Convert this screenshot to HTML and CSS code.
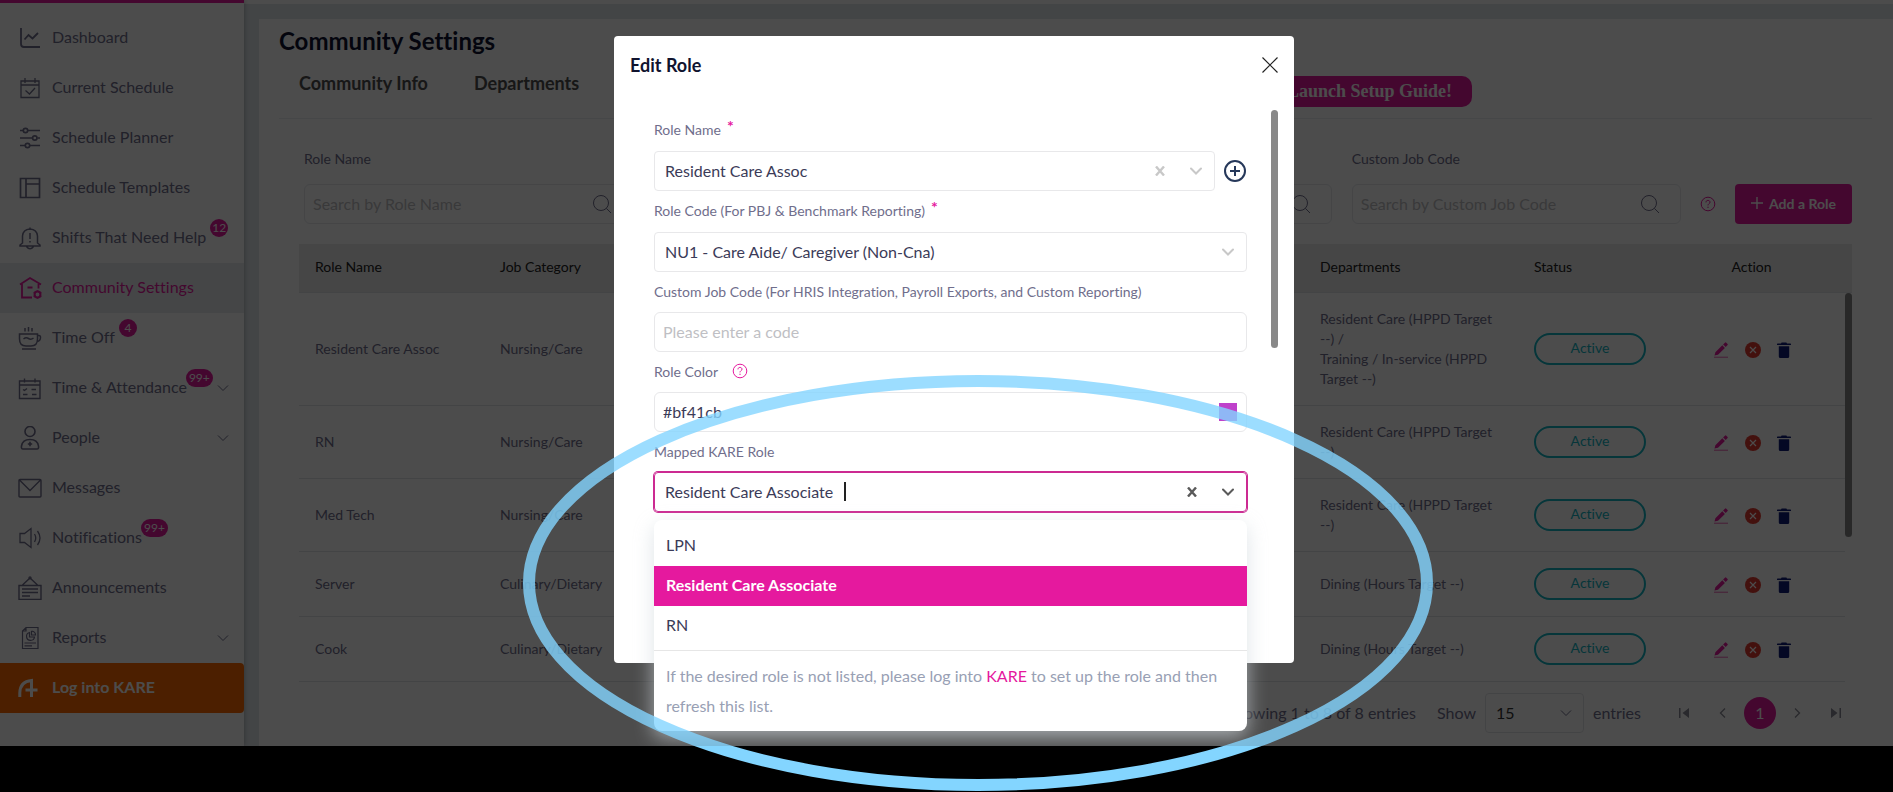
FILE: index.html
```
<!DOCTYPE html>
<html lang="en">
<head>
    <meta charset="UTF-8">
    <meta name="viewport" content="width=device-width, initial-scale=1.0">
    <title>Community Settings</title>
    <link rel="stylesheet" href="styles.css">
</head>
<body>
<svg class="sprite" aria-hidden="true">
    <symbol id="chevron" viewBox="0 0 12 8"><path d="M1 1.5L6 6.5L11 1.5"/></symbol>
    <symbol id="search" viewBox="0 0 20 20"><circle cx="9" cy="9" r="7.5"/><path d="M14.3 14.3L19 19"/></symbol>
    <symbol id="help" viewBox="0 0 16 16"><circle cx="8" cy="8" r="6.8"/><path d="M6 6.4C6 5 6.8 4.4 8 4.4S10 5.2 10 6.2C10 7.6 8 7.6 8 9.4M8 10.7V12"/></symbol>
    <symbol id="edit" viewBox="0 0 16 18">
        <path fill="#e5199e" d="M1.5 14.5L2.4 11.2L9.3 4.3L11.9 6.9L5 13.8ZM10.1 3.5L12.2 1.4Q12.6 1 13 1.4L14.6 3Q15 3.5 14.6 4L12.7 6.1Z"/>
        <path fill="#f08cc8" d="M1 15.6H15V17H1Z"/>
    </symbol>
    <symbol id="deny" viewBox="0 0 16 16"><circle cx="8" cy="8" r="8" fill="#e23b30" stroke="none"/><path d="M5 5L11 11M11 5L5 11" stroke="#fff" stroke-width="1.2"/></symbol>
    <symbol id="trash" viewBox="0 0 14 16"><path fill="#101d7a" d="M0 2.2Q0 1.6 .6 1.6H4L4.6 .4H9.4L10 1.6H13.4Q14 1.6 14 2.2V3H0ZM1.8 4.2H12.2V14.5Q12.2 16 10.7 16H3.3Q1.8 16 1.8 14.5Z"/></symbol>
</svg>

<div class="app">
    <nav class="sidebar">
        <a class="nav_item" href="#">
            <svg class="nav_icon" viewBox="0 0 24 24"><path stroke-width="1.8" d="M3 2V18Q3 21 6 21H22M6.5 13.5L10.5 9L14.5 12.5L20 7"/></svg>
            <span class="nav_label">Dashboard</span>
        </a>
        <a class="nav_item" href="#">
            <svg class="nav_icon" viewBox="0 0 24 24"><path d="M3 5H21V21.5H3ZM3 9H21M7 2V7M17 2V7M7.5 14.5L11.5 18L17 12"/></svg>
            <span class="nav_label">Current Schedule</span>
        </a>
        <a class="nav_item" href="#">
            <svg class="nav_icon" viewBox="0 0 24 24"><g stroke-width="1.7"><path d="M2 4.5H5M10 4.5H22M2 12H14M19.5 12H22M2 19.5H7M12 19.5H22"/><circle cx="7.5" cy="4.5" r="2.2"/><circle cx="16.8" cy="12" r="2.2"/><circle cx="9.5" cy="19.5" r="2.2"/></g></svg>
            <span class="nav_label">Schedule Planner</span>
        </a>
        <a class="nav_item" href="#">
            <svg class="nav_icon" viewBox="0 0 24 24"><path stroke-width="1.7" d="M2.5 2.5H21.5V21.5H2.5ZM8 2.5V21.5M8 8H21.5"/></svg>
            <span class="nav_label">Schedule Templates</span>
        </a>
        <a class="nav_item" href="#">
            <svg class="nav_icon" viewBox="0 0 24 24"><path stroke-width="1.5" d="M4.5 17V10Q5 3.5 12 3Q19 3.5 19.5 10V17L22 19V20H2V19ZM8.5 20.5Q12 25 15.5 20.5M12 1.5V3M12 7V13M12 15V16.5"/></svg>
            <span class="nav_label">Shifts That Need Help<span class="badge">12</span></span>
        </a>
        <a class="nav_item active" href="#">
            <svg class="nav_icon" viewBox="0 0 24 24"><path stroke-width="1.8" d="M2 8.5L12 2L23 8.5M4 8V21.5H14M20.5 8V12.5M9.5 11.5H14.5"/><circle cx="19.5" cy="18.5" r="2.9" stroke-width="2"/><path stroke-width="1.7" d="M19.5 14.2V15M19.5 22V22.8M15.7 16.3L16.5 16.8M22.5 20.2L23.3 20.7M15.7 20.7L16.5 20.2M22.5 16.8L23.3 16.3"/></svg>
            <span class="nav_label">Community Settings</span>
        </a>
        <a class="nav_item" href="#">
            <svg class="nav_icon" viewBox="0 0 24 24"><path stroke-width="1.5" d="M1.5 8H19.5V13Q19.5 20 13 20H8Q1.5 20 1.5 13ZM19.5 9.5H21Q22.5 9.5 22.5 11.5Q22.5 15 19 15.5M4 23H18M7 2V5.5M10.5 1V5.5M14 2V5.5M5.5 13Q8 11 10.5 12.5T15.5 12"/></svg>
            <span class="nav_label">Time Off<span class="badge">4</span></span>
        </a>
        <a class="nav_item" href="#">
            <svg class="nav_icon" viewBox="0 0 24 24"><path stroke-width="1.4" d="M1.5 5H22V22.5H1.5ZM1.5 9H22M6.5 2.5V6.5M17 2.5V6.5M5 13.5L6.5 14.5L9 12.5M13.5 13.5H18M5 18.5H9.5M14 18.5H18.5"/></svg>
            <span class="nav_label">Time &amp; Attendance<span class="badge wide">99+</span></span>
            <svg class="nav_chevron"><use href="#chevron"/></svg>
        </a>
        <a class="nav_item" href="#">
            <svg class="nav_icon" viewBox="0 0 24 24"><g stroke-width="1.6"><circle cx="12" cy="5.5" r="5"/><path d="M5 23Q3 23 3.5 20Q4.5 13.5 12 13.5T20.5 20Q21 23 19 23ZM12 15.8V20.2M9.8 18H14.2"/></g></svg>
            <span class="nav_label">People</span>
            <svg class="nav_chevron"><use href="#chevron"/></svg>
        </a>
        <a class="nav_item" href="#">
            <svg class="nav_icon" viewBox="0 0 24 24"><path stroke-width="1.4" d="M2 3.5H22Q23 3.5 23 4.5V20Q23 21 22 21H2Q1 21 1 20V4.5Q1 3.5 2 3.5ZM1.5 4L12 14.5L22.5 4"/></svg>
            <span class="nav_label">Messages</span>
        </a>
        <a class="nav_item" href="#">
            <svg class="nav_icon" viewBox="0 0 24 24"><path d="M2 7.5H6.5L13 2.5V21.5L6.5 16.5H2ZM16.5 8Q19 12 16.5 16M19.5 5Q24.5 12 19.5 19"/></svg>
            <span class="nav_label">Notifications<span class="badge wide">99+</span></span>
        </a>
        <a class="nav_item" href="#">
            <svg class="nav_icon" viewBox="0 0 24 24"><path stroke-width="1.4" d="M1 9.5H23V23.5H1ZM4.5 9L12 2L19.5 9M4 13H20M4 16.5H20M4 20H12"/><circle cx="12" cy="1.8" r="1"/></svg>
            <span class="nav_label">Announcements</span>
        </a>
        <a class="nav_item" href="#">
            <svg class="nav_icon" viewBox="0 0 24 24"><path stroke-width="1.2" d="M8 1.5H20V22.5H4.5V5ZM8 1.5V5H4.5M6.5 17H18M6.5 19.8H14M11.5 6.5A4 4 0 1 0 16.5 11H11.5ZM13.5 5V9H17.5Q17.5 5.5 13.5 5"/></svg>
            <span class="nav_label">Reports</span>
            <svg class="nav_chevron"><use href="#chevron"/></svg>
        </a>
        <a class="nav_item kare" href="#">
            <svg class="nav_icon" viewBox="0 0 24 24"><path stroke-width="3" d="M1.8 21V17Q2 5.500 13.500 4.500V21M7.500 14H19.500"/></svg>
            <span class="nav_label">Log into KARE</span>
        </a>
    </nav>

    <main class="card">
        <h1>Community Settings</h1>
        <div class="tabs">
            <a class="tab" href="#">Community Info</a>
            <a class="tab" href="#">Departments</a>
            <button type="button" class="guide">Launch Setup Guide!</button>
        </div>

        <div class="toolbar">
            <div class="filters">
                <div class="filter">
                    <label for="f_role">Role Name</label>
                    <div class="search_box">
                        <input type="text" id="f_role" placeholder="Search by Role Name">
                        <svg><use href="#search"/></svg>
                    </div>
                </div>
                <div class="filter filter_job">
                    <div class="search_box">
                        <input type="text" aria-label="Job">
                        <svg><use href="#search"/></svg>
                    </div>
                </div>
                <div class="filter">
                    <label for="f_code">Custom Job Code</label>
                    <div class="search_box">
                        <input type="text" id="f_code" placeholder="Search by Custom Job Code">
                        <svg><use href="#search"/></svg>
                    </div>
                </div>
            </div>
            <svg class="help"><use href="#help"/></svg>
            <button type="button" class="add_role"><svg viewBox="0 0 12 12"><path d="M6 0V12M0 6H12"/></svg>Add a Role</button>
        </div>

        <div class="table_box">
            <table>
                <colgroup><col class="c_name"><col class="c_cat"><col><col class="c_dep"><col class="c_status"><col class="c_action"></colgroup>
                <thead>
                <tr><th>Role Name</th><th>Job Category</th><th></th><th>Departments</th><th>Status</th><th class="action">Action</th></tr>
                </thead>
                <tbody>
                <tr>
                    <td>Resident Care Assoc</td><td>Nursing/Care</td><td></td>
                    <td>Resident Care (HPPD Target <span class="target">--)</span> /<br>Training / In-service (HPPD Target <span class="target">--)</span></td>
                    <td><button type="button" class="status">Active</button></td>
                    <td class="action"><svg class="i_edit"><use href="#edit"/></svg><svg class="i_deny"><use href="#deny"/></svg><svg class="i_trash"><use href="#trash"/></svg></td>
                </tr>
                <tr>
                    <td>RN</td><td>Nursing/Care</td><td></td>
                    <td>Resident Care (HPPD Target <span class="target">--)</span></td>
                    <td><button type="button" class="status">Active</button></td>
                    <td class="action"><svg class="i_edit"><use href="#edit"/></svg><svg class="i_deny"><use href="#deny"/></svg><svg class="i_trash"><use href="#trash"/></svg></td>
                </tr>
                <tr>
                    <td>Med Tech</td><td>Nursing/Care</td><td></td>
                    <td>Resident Care (HPPD Target <span class="target">--)</span></td>
                    <td><button type="button" class="status">Active</button></td>
                    <td class="action"><svg class="i_edit"><use href="#edit"/></svg><svg class="i_deny"><use href="#deny"/></svg><svg class="i_trash"><use href="#trash"/></svg></td>
                </tr>
                <tr>
                    <td>Server</td><td>Culinary/Dietary</td><td></td>
                    <td>Dining (Hours Target <span class="target">--)</span></td>
                    <td><button type="button" class="status">Active</button></td>
                    <td class="action"><svg class="i_edit"><use href="#edit"/></svg><svg class="i_deny"><use href="#deny"/></svg><svg class="i_trash"><use href="#trash"/></svg></td>
                </tr>
                <tr>
                    <td>Cook</td><td>Culinary/Dietary</td><td></td>
                    <td>Dining (Hours Target <span class="target">--)</span></td>
                    <td><button type="button" class="status">Active</button></td>
                    <td class="action"><svg class="i_edit"><use href="#edit"/></svg><svg class="i_deny"><use href="#deny"/></svg><svg class="i_trash"><use href="#trash"/></svg></td>
                </tr>
                </tbody>
            </table>
            <div class="table_scroll"></div>
        </div>

        <div class="pager">
            <span class="showing">Showing 1 to 8 of 8 entries</span>
            <label for="page_size">Show</label>
            <span class="page_size">
                <select id="page_size"><option>15</option></select>
                <svg><use href="#chevron"/></svg>
            </span>
            <span>entries</span>
            <span class="pages">
                <button type="button" aria-label="First"><svg viewBox="0 0 12 12"><path fill="currentColor" stroke="none" d="M1 1H2.500V11H1ZM11 1V11L4.500 6Z"/></svg></button>
                <button type="button" aria-label="Previous"><svg viewBox="0 0 12 12"><path d="M8 1.500L3.500 6L8 10.500"/></svg></button>
                <button type="button" class="current">1</button>
                <button type="button" aria-label="Next"><svg viewBox="0 0 12 12"><path d="M4 1.500L8.500 6L4 10.500"/></svg></button>
                <button type="button" aria-label="Last"><svg viewBox="0 0 12 12"><path fill="currentColor" stroke="none" d="M9.500 1H11V11H9.500ZM1 1V11L7.500 6Z"/></svg></button>
            </span>
        </div>
    </main>

    <div class="overlay">
        <div class="modal" role="dialog" aria-labelledby="modal_title">
            <div class="modal_head">
                <h2 id="modal_title">Edit Role</h2>
                <button type="button" class="close" aria-label="Close"><svg viewBox="0 0 16 16"><path d="M.5 .5L15.500 15.500M15.500 .5L.5 15.500"/></svg></button>
            </div>
            <div class="modal_body">
                <label class="required" for="role_name">Role Name <b>*</b></label>
                <div class="role_row">
                    <div class="field">
                        <select id="role_name"><option>Resident Care Assoc</option></select>
                        <svg class="clear" viewBox="0 0 10 10"><path d="M1 .5L9 9.500M9 .5L1 9.500"/></svg>
                        <svg class="arrow"><use href="#chevron"/></svg>
                    </div>
                    <button type="button" class="plus" aria-label="Add role name"><svg viewBox="0 0 22 22"><circle cx="11" cy="11" r="10"/><path d="M11 6V16M6 11H16"/></svg></button>
                </div>
                <label class="required" for="role_code">Role Code (For PBJ &amp; Benchmark Reporting) <b>*</b></label>
                <div class="field">
                    <select id="role_code"><option>NU1 - Care Aide/ Caregiver (Non-Cna)</option></select>
                    <svg class="arrow"><use href="#chevron"/></svg>
                </div>
                <label for="job_code">Custom Job Code (For HRIS Integration, Payroll Exports, and Custom Reporting)</label>
                <div class="field text">
                    <input type="text" id="job_code" placeholder="Please enter a code">
                </div>
                <label for="role_color">Role Color <svg class="help"><use href="#help"/></svg></label>
                <div class="field text">
                    <input type="text" id="role_color" value="#bf41cb">
                    <span class="swatch"></span>
                </div>
                <label for="kare_role">Mapped KARE Role</label>
                <div class="field focused">
                    <input type="text" id="kare_role" role="combobox" aria-expanded="true" aria-controls="kare_list" value="Resident Care Associate">
                    <span class="caret"></span>
                    <svg class="clear" viewBox="0 0 10 10"><path d="M1 .5L9 9.500M9 .5L1 9.500"/></svg>
                    <svg class="arrow"><use href="#chevron"/></svg>
                    <div class="menu">
                        <ul id="kare_list" role="listbox">
                            <li role="option">LPN</li>
                            <li role="option" class="selected" aria-selected="true">Resident Care Associate</li>
                            <li role="option">RN</li>
                        </ul>
                        <p>If the desired role is not listed, please log into <a href="#">KARE</a> to set up the role and then refresh this list.</p>
                    </div>
                </div>
                <div class="modal_scroll"></div>
            </div>
        </div>
    </div>
</div>

<!-- highlight ring, solid where it leaves the app -->
<svg class="ring" viewBox="0 0 1893 792" aria-hidden="true">
    <clipPath id="inside"><rect width="1893" height="746"/></clipPath>
    <clipPath id="outside"><rect y="746" width="1893" height="46"/></clipPath>
    <ellipse cx="978" cy="583" rx="449" ry="202" opacity="0.8" clip-path="url(#inside)"/>
    <ellipse cx="978" cy="583" rx="449" ry="202" clip-path="url(#outside)"/>
</svg>
</body>
</html>
```
FILE: styles.css
```
*{
    box-sizing: border-box;
}
body{
    margin: 0;
    height: 100vh;
    padding-bottom: 46px;
    overflow: hidden;
    position: relative;
    background: #000;
    font-family: Lato, "Liberation Sans", sans-serif;
    font-variant-ligatures: none;
    font-size: 16px;
    color: #706e8c;
}
a{
    color: inherit;
    text-decoration: none;
}
button, input, select{
    font: inherit;
    font-variant-ligatures: none;
    color: inherit;
}
button{
    border: 0;
    padding: 0;
    background: none;
}
svg{
    fill: none;
    stroke: currentColor;
    flex: none;
}
.sprite{
    position: absolute;
    width: 0;
    height: 0;
}
.app{
    position: relative;
    display: flex;
    height: 100%;
    overflow: hidden;
    background: #e0e6eb;
    box-shadow: inset 0 4px 0 #fff;
}

/* sidebar */
.sidebar{
    width: 244px;
    flex: none;
    padding-top: 10px;
    border-top: 3px solid #e5199e;
    background: #fff;
    box-shadow: 0 0 5px rgba(0, 0, 0, 0.3);
}
.nav_item{
    display: flex;
    align-items: center;
    gap: 10px;
    height: 50px;
    padding: 0 15px 0 18px;
}
.nav_icon{
    width: 24px;
    height: 24px;
    stroke-width: 1.3;
}
.nav_label{
    position: relative;
    padding-bottom: 3px;
    white-space: nowrap;
}
.nav_chevron{
    width: 12px;
    height: 8px;
    margin-left: auto;
}
.active{
    color: #e5199e;
    background: #e6eaed;
}
.kare{
    background: #ff6a00;
    color: #fff;
    font-weight: bold;
    border-radius: 0 4px 4px 0;
}
.badge{
    position: absolute;
    left: 100%;
    top: -8px;
    margin-left: 4px;
    min-width: 18px;
    height: 18px;
    border-radius: 9px;
    background: #e5199e;
    color: #fff;
    font-size: 12px;
    line-height: 18px;
    text-align: center;
}
.badge.wide{
    margin-left: -1px;
    width: 27px;
}

/* page */
.card{
    flex: 1;
    min-width: 0;
    margin: 19px 0 0 15px;
    padding: 6px 21px 0 20px;
    background: #fff;
}
h1{
    margin: 0;
    font-size: 24px;
    line-height: 32px;
    color: #10132f;
}
.tabs{
    display: flex;
    align-items: flex-start;
    gap: 46px;
    height: 62px;
    padding: 0 400px 0 20px;
    border-bottom: 1px solid #eceef2;
}
.tab{
    padding-top: 14px;
    font-size: 18px;
    line-height: 24px;
    font-weight: bold;
    color: #4e4e4e;
}
.guide{
    margin: 19px 0 0 auto;
    height: 31px;
    padding: 0 20px;
    border-radius: 10px;
    background: #e5199e;
    color: #fff;
    font-family: "Liberation Serif", serif;
    font-size: 18px;
    font-weight: bold;
}
.toolbar{
    display: flex;
    align-items: flex-end;
    gap: 19px;
    padding: 30px 20px 20px 25px;
}
.filters{
    flex: 1;
    display: grid;
    grid-template-columns: repeat(4, 1fr);
    gap: 20px;
}
.filter label{
    display: block;
    font-size: 14px;
    line-height: 20px;
    padding-bottom: 15px;
}
.filter_job{
    grid-column: 3;
    align-self: end;
}
.search_box{
    display: flex;
    align-items: center;
    height: 40px;
    padding: 0 20px 0 8px;
    border: 1px solid #e6e8ec;
    border-radius: 6px;
}
.search_box input{
    flex: 1;
    min-width: 0;
    border: 0;
    background: none;
    padding: 0 0 2px;
}
.search_box svg{
    width: 20px;
    height: 20px;
}
::placeholder{
    color: #bfbfc4;
    opacity: 1;
}
.help{
    width: 16px;
    height: 16px;
    color: #e5199e;
}
.toolbar .help{
    margin-bottom: 12px;
}
.add_role{
    display: flex;
    align-items: center;
    justify-content: center;
    gap: 6px;
    width: 117px;
    height: 40px;
    padding-bottom: 2px;
    border-radius: 4px;
    background: #e5199e;
    color: #fff;
    font-size: 14px;
    font-weight: bold;
}
.add_role svg{
    width: 12px;
    height: 12px;
    stroke-width: 1.4;
}
.table_box{
    position: relative;
    margin: 0 20px;
}
table{
    width: 100%;
    table-layout: fixed;
    border-collapse: collapse;
    font-size: 14px;
    line-height: 20px;
}
.c_name, .c_cat{
    width: 185px;
}
.c_dep{
    width: 214px;
}
.c_status{
    width: 144px;
}
.c_action{
    width: 190px;
}
th{
    height: 48px;
    padding: 0 16px 1px;
    text-align: left;
    font-weight: normal;
    color: #222;
    background: #e9e9e9;
    border-bottom: 1px solid #e2e4e8;
}
td{
    padding: 16px;
    border-bottom: 1px solid #e2e4e8;
}
.target{
    white-space: nowrap;
}
.action{
    text-align: center;
    white-space: nowrap;
    padding-right: 27px;
}
.action svg{
    vertical-align: middle;
    margin: 0 8px;
}
.i_edit{
    width: 16px;
    height: 18px;
    stroke: none;
}
.i_deny{
    width: 16px;
    height: 16px;
}
.i_trash{
    width: 14px;
    height: 16px;
    stroke: none;
}
.status{
    display: block;
    width: 112px;
    height: 32px;
    padding-bottom: 2px;
    border: 2px solid #14b5c4;
    border-radius: 16px;
    color: #14b5c4;
}
.table_scroll{
    position: absolute;
    top: 49px;
    right: 0;
    bottom: 0;
    width: 7px;
    background: #fff;
}
.table_scroll::before{
    content: "";
    display: block;
    height: 244px;
    border-radius: 4px;
    background: #888;
}
.pager{
    display: flex;
    align-items: center;
    justify-content: flex-end;
    gap: 9px;
    padding: 11px 28px 0 0;
}
.showing{
    margin-right: 12px;
}
.page_size{
    position: relative;
    width: 99px;
}
.page_size select{
    appearance: none;
    display: block;
    width: 100%;
    height: 40px;
    padding: 0 10px;
    border: 1px solid #e2e4e8;
    border-radius: 4px;
    background: none;
    color: #333;
}
.page_size svg{
    position: absolute;
    right: 12px;
    top: 16px;
    width: 12px;
    height: 8px;
}
.pages{
    display: flex;
    align-items: center;
    margin-left: 26px;
    gap: 12px;
    color: #8a8a96;
}
.pages button{
    display: grid;
    place-items: center;
    width: 16px;
    height: 32px;
}
.pages button:first-child{
    margin-right: 11px;
}
.pages button:last-child{
    margin-left: 11px;
}
.pages svg{
    width: 12px;
    height: 12px;
    stroke-width: 1.3;
}
.pages .current{
    width: 32px;
    margin: 0 1px;
    border-radius: 16px;
    background: #e5199e;
    color: #fff;
}

/* dialog */
.overlay{
    position: absolute;
    inset: 0;
    display: flex;
    justify-content: center;
    align-items: flex-start;
    padding: 36px 0 0 15px;
    background: rgba(0, 0, 0, 0.7);
}
.modal{
    width: 680px;
    border-radius: 4px;
    background: #fff;
}
.modal_head{
    display: flex;
    justify-content: space-between;
    align-items: center;
    height: 74px;
    padding: 0 16px 16px;
}
.modal_head h2{
    margin: 0;
    font-size: 18px;
    color: #10132f;
}
.close{
    width: 16px;
    height: 16px;
    color: #222;
}
.close svg{
    display: block;
    stroke-width: 1.2;
}
.modal_body{
    position: relative;
    padding: 0 47px 151px 40px;
}
.modal_body label{
    display: flex;
    align-items: center;
    height: 40px;
    padding-bottom: 2px;
    font-size: 14px;
}
.modal_body label.required{
    height: 41px;
}
.required b{
    margin: -8px 0 0 6px;
    font-size: 16px;
    color: #e5199e;
}
.modal_body .help{
    margin-left: 14px;
}
.role_row{
    display: flex;
    align-items: center;
    gap: 9px;
    padding-right: 1px;
}
.role_row .field{
    flex: 1;
}
.field{
    position: relative;
    display: flex;
    align-items: center;
    height: 40px;
    padding: 0 12px 0 10px;
    border: 1px solid #e8e8ea;
    border-radius: 4px;
    color: #3b3b58;
}
.field.text{
    padding: 0 9px 0 8px;
    border-radius: 6px;
}
.field select, .field input{
    appearance: none;
    flex: 1;
    min-width: 0;
    padding: 0 0 2px;
    border: 0;
    outline: 0;
    background: none;
}
.clear{
    width: 10px;
    height: 10px;
    margin-right: 25px;
    stroke-width: 2.4;
}
.arrow{
    width: 12px;
    height: 8px;
    stroke-width: 2;
    stroke-linecap: round;
}
.field .clear, .field .arrow{
    color: #c8c8c8;
}
.plus{
    width: 22px;
    height: 22px;
    color: #26385a;
}
.plus svg{
    display: block;
    stroke-width: 2;
}
.swatch{
    width: 18px;
    height: 18px;
    background: #bf41cb;
}
.focused{
    border-color: #cc2a92;
    box-shadow: 0 0 0 1px #cc2a92;
}
.field.focused .clear, .field.focused .arrow{
    color: #5a5a5a;
}
.caret{
    position: absolute;
    left: 189px;
    top: 9px;
    width: 2px;
    height: 19px;
    background: #222;
}
.menu{
    position: absolute;
    left: -1px;
    right: -1px;
    top: 47px;
    padding-top: 6px;
    border-radius: 8px;
    background: #fff;
    box-shadow: 0 6px 20px rgba(210, 216, 222, 0.7);
}
.menu ul{
    list-style: none;
    margin: 0;
    padding: 0 0 4px;
    border-bottom: 1px solid #e6e6e6;
}
.menu li{
    padding: 0 12px 2px;
    line-height: 38px;
}
.menu .selected{
    background: #e5199e;
    color: #fff;
    font-weight: bold;
}
.menu p{
    margin: 0;
    padding: 10px 12px;
    line-height: 30px;
    color: #98a0b4;
}
.menu a{
    color: #e5199e;
}
.modal_scroll{
    position: absolute;
    top: 0;
    right: 16px;
    width: 7px;
    height: 238px;
    border-radius: 4px;
    background: #888;
}
.ring{
    position: absolute;
    top: 0;
    left: 0;
    width: 100%;
    stroke: #83d5ff;
    stroke-width: 12;
    pointer-events: none;
}
```
